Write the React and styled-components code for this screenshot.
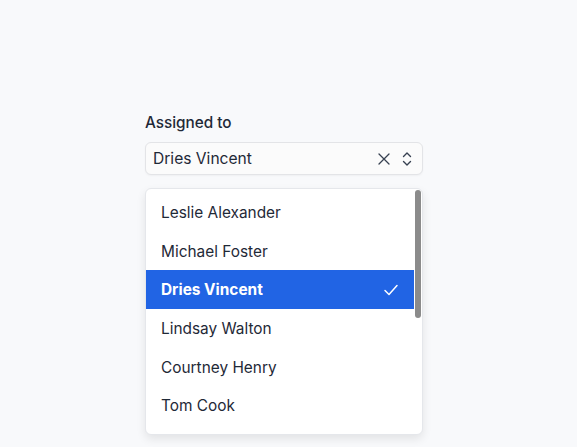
import React from "react";
import styled, { createGlobalStyle } from "styled-components";

const people = [
  "Leslie Alexander",
  "Michael Foster",
  "Dries Vincent",
  "Lindsay Walton",
  "Courtney Henry",
  "Tom Cook",
];

export default function App() {
  const selected = "Dries Vincent";
  return (
    <>
      <GlobalStyle />
      <Page>
        <Field>
          <Label>Assigned to</Label>
          <InputBox>
            <Value>{selected}</Value>
            <Icons>
              <svg width="12" height="12" viewBox="0 0 12 12" fill="none">
                <path
                  d="M1 1l10 10M11 1L1 11"
                  stroke="#374151"
                  strokeWidth="1.3"
                  strokeLinecap="round"
                />
              </svg>
              <svg width="10" height="14" viewBox="0 0 10 14" fill="none">
                <path
                  d="M1.5 4.5L5 1l3.5 3.5M1.5 9.5L5 13l3.5-3.5"
                  stroke="#374151"
                  strokeWidth="1.4"
                  strokeLinecap="round"
                  strokeLinejoin="round"
                />
              </svg>
            </Icons>
          </InputBox>
          <Menu>
            {people.map((name) => (
              <Option key={name} active={name === selected}>
                <span>{name}</span>
                {name === selected && (
                  <svg width="16" height="16" viewBox="0 0 16 16" fill="none">
                    <path
                      d="M2 8.5l4 4L14 3.5"
                      stroke="#ffffff"
                      strokeWidth="1.5"
                      strokeLinecap="round"
                      strokeLinejoin="round"
                    />
                  </svg>
                )}
              </Option>
            ))}
            <ScrollThumb />
          </Menu>
        </Field>
      </Page>
    </>
  );
}

const GlobalStyle = createGlobalStyle`
  body {
    margin: 0;
    background: #f8f9fb;
    font-family: Inter, "Noto Sans", sans-serif;
  }
`;

const Page = styled.div`
  height: 447px;
  padding: 114px 0 0 145px;
  box-sizing: border-box;
`;

const Field = styled.div`
  width: 278px;
  display: flex;
  flex-direction: column;
`;

const Label = styled.div`
  font-size: 15.3px;
  font-weight: 500;
  color: #1f2937;
  line-height: 18px;
  margin-bottom: 10px;
`;

const InputBox = styled.div`
  height: 33px;
  box-sizing: border-box;
  border: 1px solid #e3e4e7;
  border-radius: 6px;
  background: #fbfbfb;
  box-shadow: 0 1px 2px rgba(0, 0, 0, 0.04);
  display: flex;
  align-items: center;
  justify-content: space-between;
  padding: 0 10px 0 7px;
`;

const Value = styled.span`
  font-size: 15.6px;
  color: #1f2937;
`;

const Icons = styled.div`
  display: flex;
  align-items: center;
  gap: 12px;
`;

const Menu = styled.div`
  position: relative;
  margin-top: 13px;
  height: 247px;
  box-sizing: border-box;
  padding: 4px 8px 0 0;
  background: #ffffff;
  border: 1px solid #e5e7eb;
  border-radius: 6px;
  box-shadow: 0 4px 10px rgba(0, 0, 0, 0.09);
  overflow: hidden;
`;

const ScrollThumb = styled.div`
  position: absolute;
  top: 1px;
  right: 1px;
  width: 6px;
  height: 128px;
  border-radius: 3px;
  background: #8b8b8b;
`;

const Option = styled.div`
  height: 38.7px;
  display: flex;
  align-items: center;
  justify-content: space-between;
  padding: 0 15px 0 15px;
  font-size: 15.4px;
  color: ${({ active }) => (active ? "#ffffff" : "#1f2937")};
  font-weight: ${({ active }) => (active ? 700 : 400)};
  background: ${({ active }) => (active ? "#2164e4" : "transparent")};
`;
